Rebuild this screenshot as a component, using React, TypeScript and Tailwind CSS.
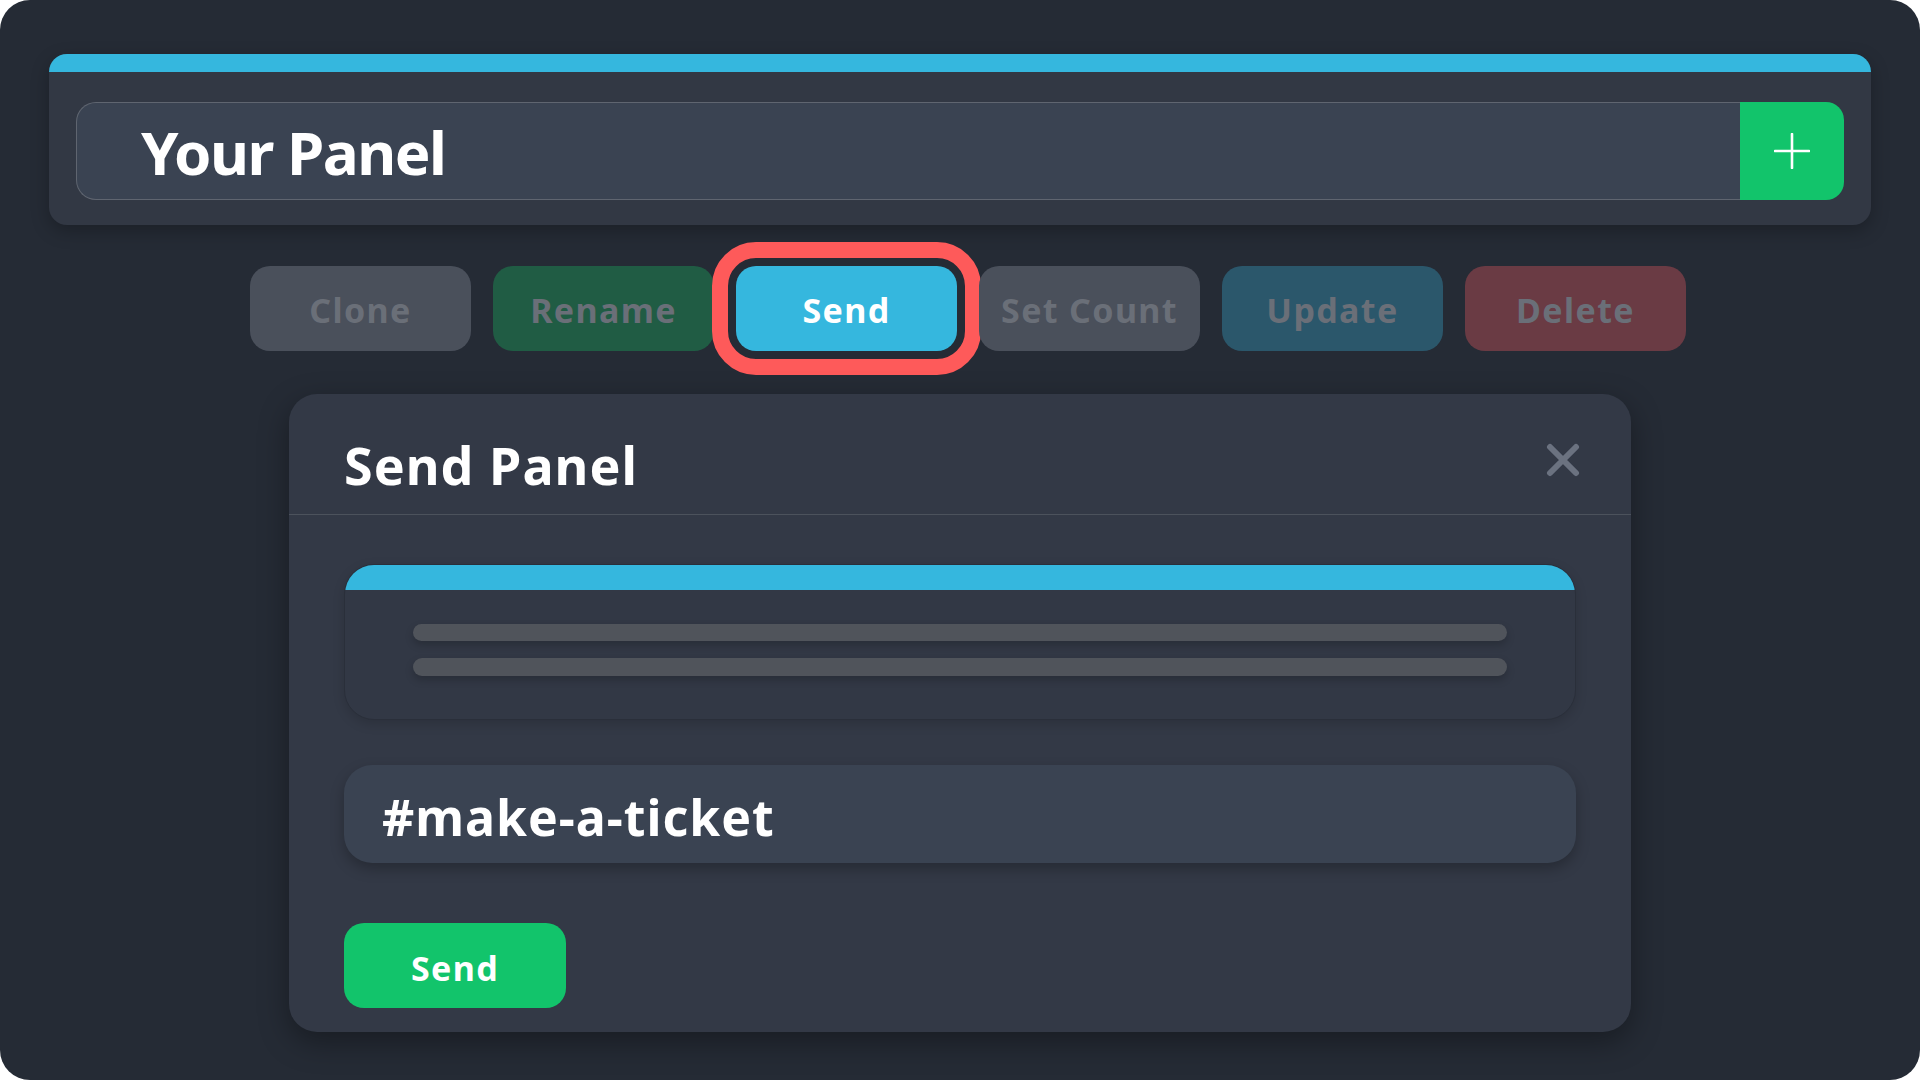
import React from "react";
import clsx from "clsx";

const font = { fontFamily: '"Noto Sans", "Open Sans", sans-serif' };

interface Action {
  label: string;
  className: string;
  active?: boolean;
}

const actions: Action[] = [
  { label: "Clone", className: "bg-[#4a505b] text-[#6a6f78]" },
  { label: "Rename", className: "bg-[#205c44] text-[#6a6f78]" },
  { label: "Send", className: "bg-[#35b7de] text-white", active: true },
  { label: "Set Count", className: "bg-[#4a505b] text-[#6a6f78]" },
  { label: "Update", className: "bg-[#2b576b] text-[#6a6f78]" },
  { label: "Delete", className: "bg-[#6a3b44] text-[#6a6f78]" },
];

const PlusIcon = () => (
  <svg width="36" height="36" viewBox="0 0 36 36" fill="none">
    <path d="M18 1v34M1 18h34" stroke="white" strokeWidth="2.6" strokeLinecap="round" />
  </svg>
);

const CloseIcon = () => (
  <svg width="34" height="34" viewBox="0 0 34 34" fill="none">
    <path d="M4 4l26 26M30 4L4 30" stroke="#6b7280" strokeWidth="6" strokeLinecap="round" />
  </svg>
);

export default function App() {
  return (
    <div className="w-[1920px] h-[1080px] bg-white" style={font}>
      <div className="w-full h-full rounded-[30px] bg-[#252b35] px-[49px] pt-[54px] flex flex-col">
        {/* panel header card */}
        <div className="rounded-[18px] bg-[#323844] overflow-hidden shadow-[0_6px_18px_rgba(0,0,0,0.25)]">
          <div className="h-[18px] bg-[#35b7de]" />
          <div className="px-[27px] pt-[30px] pb-[25px]">
            <div className="flex h-[98px]">
              <div className="flex-1 flex items-center pl-[64px] bg-[#3a4352] border border-r-0 border-[#5f6570] rounded-l-[20px]">
                <span className="text-[60px] font-bold text-white leading-none tracking-[-0.025em] pt-[2px]">Your Panel</span>
              </div>
              <button className="w-[104px] flex items-center justify-center bg-[#12c46b] rounded-r-[18px]">
                <PlusIcon />
              </button>
            </div>
          </div>
        </div>

        {/* action buttons */}
        <div className="flex justify-center gap-[22px] pl-[16px] mt-[41px]">
          {actions.map((a) => (
            <button
              key={a.label}
              className={clsx(
                "w-[221px] h-[85px] rounded-[20px] flex items-center justify-center text-[34px] font-bold tracking-[0.04em] leading-none",
                a.className,
                a.active && "outline-[16px] outline-solid outline-[#fe5a5a] outline-offset-[8px]"
              )}
            >
              <span className="pt-[3px]">{a.label}</span>
            </button>
          ))}
        </div>

        {/* send modal */}
        <div className="mt-[43px] mx-auto w-[1342px] h-[638px] rounded-[28px] bg-[#333946] shadow-[0_10px_30px_rgba(0,0,0,0.35)] flex flex-col">
          <div className="h-[121px] flex items-center justify-between pl-[55px] pr-[51px] border-b border-[#4c525c] pt-[22px]">
            <span className="text-[52px] font-bold text-white leading-none tracking-[0.02em]">Send Panel</span>
            <button className="mb-[10px]">
              <CloseIcon />
            </button>
          </div>

          <div className="px-[55px] pt-[49px] flex flex-col">
            <div className="h-[156px] rounded-[30px] overflow-hidden border border-[#2a2f3a] bg-[#323845] shadow-[0_4px_12px_rgba(0,0,0,0.15)]">
              <div className="h-[25px] bg-[#35b7de]" />
              <div className="px-[68px] pt-[34px] flex flex-col gap-[17px]">
                <div className="h-[17px] rounded-full bg-[#50545b] shadow-[0_4px_8px_rgba(0,0,0,0.2)]" />
                <div className="h-[18px] rounded-full bg-[#50545b] shadow-[0_4px_8px_rgba(0,0,0,0.2)]" />
              </div>
            </div>

            <div className="mt-[45px] h-[98px] rounded-[28px] bg-[#3a4352] flex items-center pl-[38px] shadow-[0_6px_14px_rgba(0,0,0,0.25)]">
              <span className="text-[50px] font-bold text-white leading-none tracking-[0.02em] pt-[6px]">#make-a-ticket</span>
            </div>

            <button className="mt-[60px] w-[222px] h-[85px] rounded-[20px] bg-[#12c46b] flex items-center justify-center text-[34px] font-bold text-white tracking-[0.04em] leading-none">
              <span className="pt-[4px]">Send</span>
            </button>
          </div>
        </div>
      </div>
    </div>
  );
}
